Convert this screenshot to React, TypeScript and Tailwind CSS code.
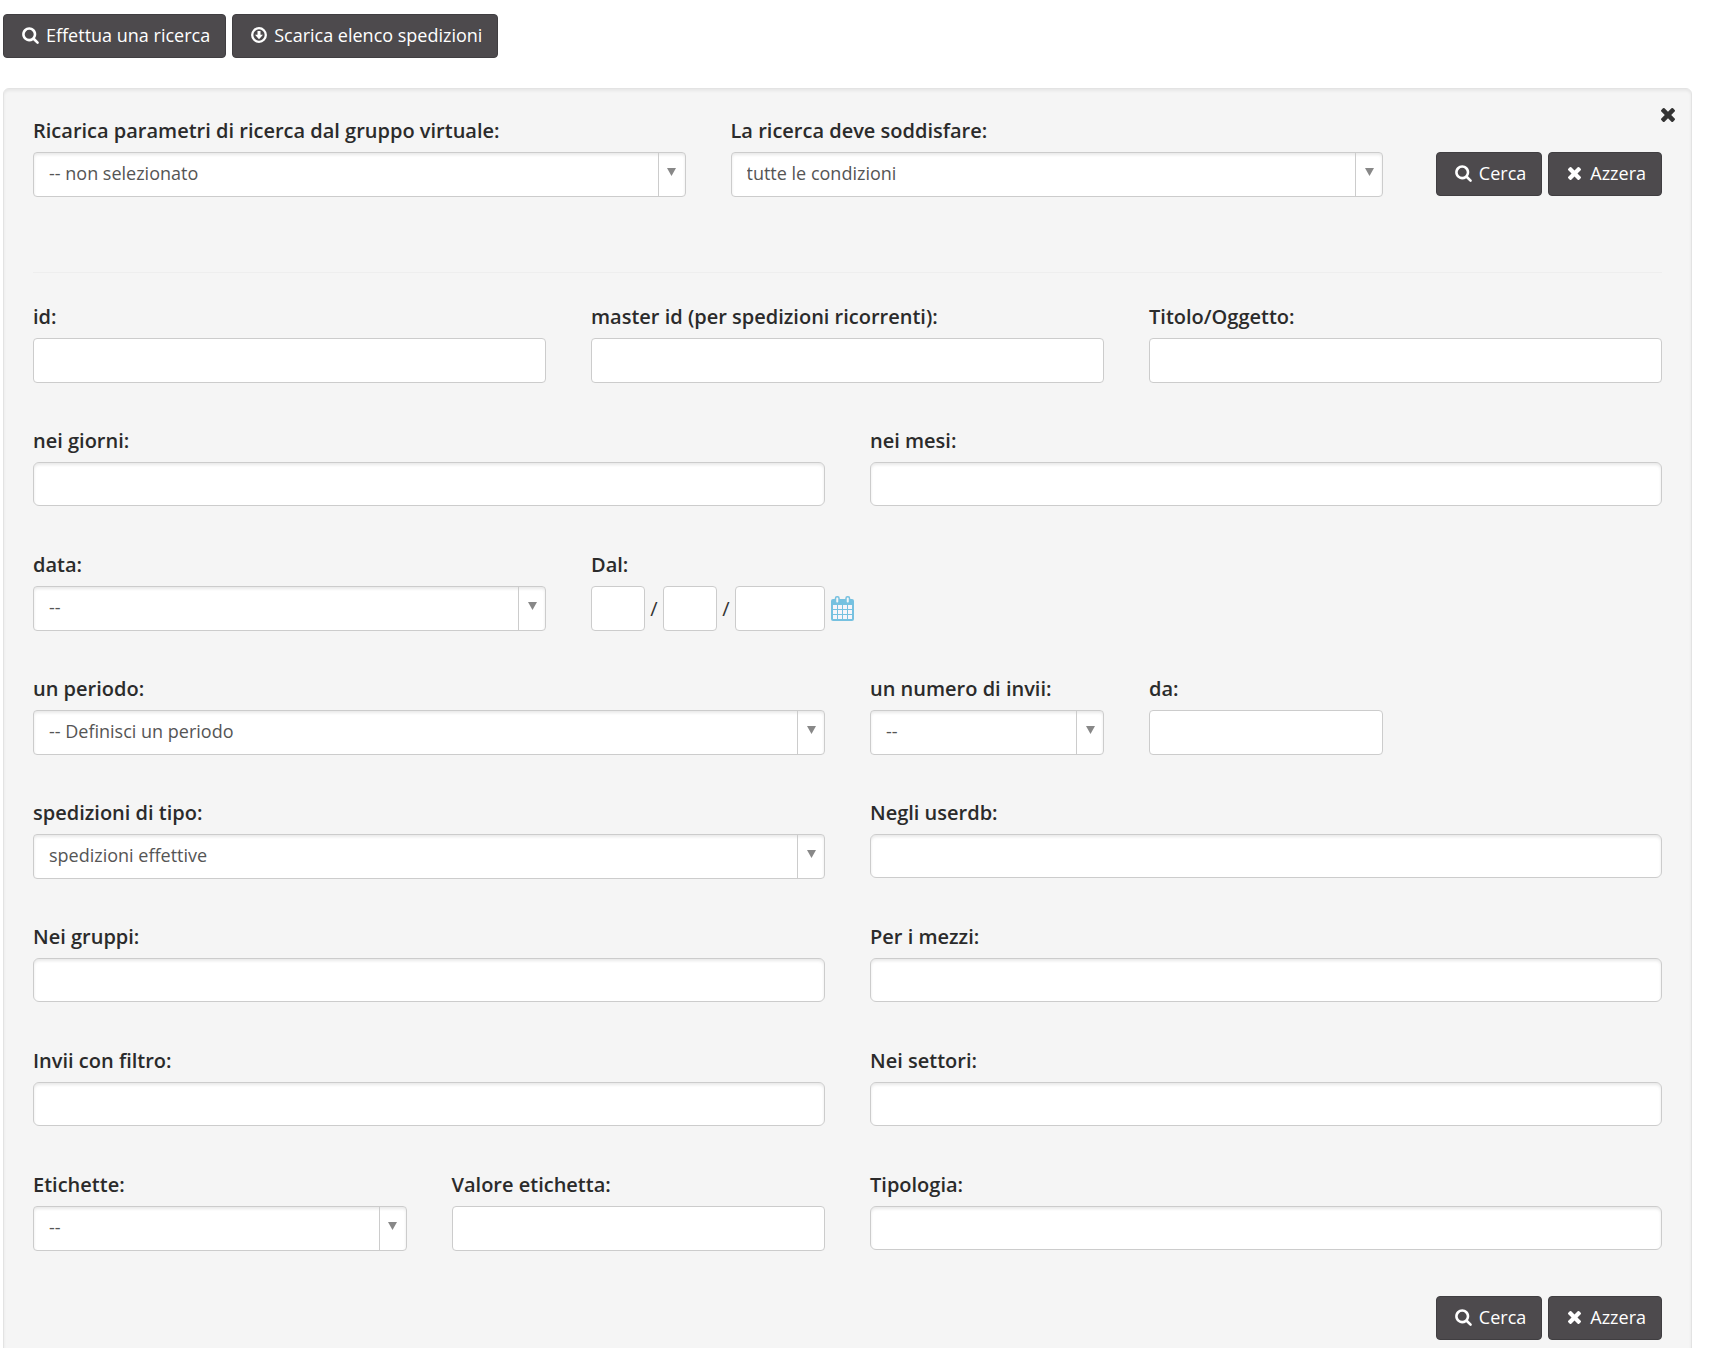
import type { ReactNode } from "react";

function SearchIcon() {
  return (
    <svg viewBox="0 0 1664 1792" className="h-[18px] w-[17px]" fill="currentColor" aria-hidden="true">
      <path d="M1152 832q0-185-131.5-316.5T704 384 387.5 515.5 256 832t131.5 316.5T704 1280t316.5-131.5T1152 832zm512 832q0 52-38 90t-90 38q-54 0-90-38l-343-342q-179 124-399 124-143 0-273.500-55.500t-225-150-150-225T0 832t55.500-273.500 150-225 225-150T704 128t273.500 55.500 225 150 150 225T1408 832q0 220-124 399l343 343q37 37 37 90z" />
    </svg>
  );
}

function CrossIcon({ className }: { className: string }) {
  return (
    <svg viewBox="302 302 1188 1188" className={className} fill="currentColor" aria-hidden="true">
      <path d="M1490 1258q0 40-28 68l-136 136q-28 28-68 28t-68-28l-294-294-294 294q-28 28-68 28t-68-28l-136-136q-28-28-28-68t28-68l294-294-294-294q-28-28-28-68t28-68l136-136q28-28 68-28t68 28l294 294 294-294q28-28 68-28t68 28l136 136q28 28 28 68t-28 68l-294 294 294 294q28 28 28 68z" />
    </svg>
  );
}

function DownloadIcon() {
  return (
    <svg viewBox="0 0 16 16" className="size-4" aria-hidden="true">
      <circle cx="8" cy="8" r="6.800" fill="none" stroke="currentColor" strokeWidth="2.300" />
      <path d="M6.500 4h3v3.700h2.500L8 12.200 4 7.700h2.500z" fill="currentColor" />
    </svg>
  );
}

function CalendarIcon() {
  return (
    <svg viewBox="0 0 23 25" className="h-[25px] w-[23px]" aria-hidden="true">
      <rect x="0" y="3" width="23" height="22" rx="2" fill="#76c1e0" />
      <g fill="#f7f5fa">
        <path d="M2 9h4v4H2zM7 9h4v4H7zM12 9h4v4h-4zM17 9h4v4h-4z" />
        <path d="M2 14h4v4H2zM7 14h4v4H7zM12 14h4v4h-4zM17 14h4v4h-4z" />
        <path d="M2 19h4v4H2zM7 19h4v4H7zM12 19h4v4h-4zM17 19h4v4h-4z" />
      </g>
      <rect x="4.500" y="0.800" width="3.500" height="6.400" rx="1.500" fill="#f5f5f5" stroke="#76c1e0" strokeWidth="1.500" />
      <rect x="15" y="0.800" width="3.500" height="6.400" rx="1.500" fill="#f5f5f5" stroke="#76c1e0" strokeWidth="1.500" />
    </svg>
  );
}

function Button({ icon, children }: { icon: ReactNode; children: ReactNode }) {
  return (
    <button
      type="button"
      className="flex h-11 items-center gap-[7px] whitespace-nowrap rounded border border-[#403e41] bg-[#4d4a4d] pb-0.5 pl-[18px] pr-[15px] text-lg leading-6 text-white"
    >
      {icon}
      {children}
    </button>
  );
}

function Actions() {
  return (
    <>
      <Button icon={<SearchIcon />}>Cerca</Button>
      <Button icon={<CrossIcon className="ml-px mr-0.5 size-[13px]" />}>Azzera</Button>
    </>
  );
}

function Field({ id, label, span, children }: { id: string; label: string; span: string; children: ReactNode }) {
  return (
    <div className={span}>
      <label htmlFor={id} className="mb-2 block whitespace-nowrap text-xl leading-[26px] font-semibold text-[#2b2b2b]">
        {label}
      </label>
      {children}
    </div>
  );
}

const shadow = "shadow-[inset_0_2px_3px_rgba(0,0,0,0.09)]";

function TextField({ id, label, span }: { id: string; label: string; span: string }) {
  return (
    <Field id={id} label={label} span={span}>
      <input id={id} type="text" className="block h-[45px] w-full rounded border border-[#ccc] bg-white px-3.5 text-lg text-[#555]" />
    </Field>
  );
}

function TagField({ id, label, span }: { id: string; label: string; span: string }) {
  return (
    <Field id={id} label={label} span={span}>
      <input id={id} type="text" className={`block h-11 w-full rounded-md border border-[#ccc] bg-white px-3.5 text-lg text-[#555] ${shadow}`} />
    </Field>
  );
}

function SelectField({ id, label, span, value }: { id: string; label: string; span: string; value: string }) {
  return (
    <Field id={id} label={label} span={span}>
      <div className="relative">
        <select
          id={id}
          className={`block h-[45px] w-full appearance-none rounded border border-[#ccc] bg-white pb-1 pl-[15px] pr-9 text-lg leading-6 text-[#555] ${shadow}`}
        >
          <option>{value}</option>
        </select>
        <span className="pointer-events-none absolute inset-y-px right-px flex w-[27px] justify-center border-l border-[#ccc] pt-[15px]">
          <svg viewBox="0 0 9 8" className="h-2 w-[9px]" fill="#888" aria-hidden="true">
            <path d="M0 0h9L4.500 8z" />
          </svg>
        </span>
      </div>
    </Field>
  );
}

const dateBox = "block h-[45px] rounded border border-[#ccc] bg-white px-2 text-lg text-[#555]";

export default function App() {
  return (
    <main className="h-screen overflow-hidden bg-white pl-[3px] pr-[21px] pt-3.5 font-['Open_Sans',sans-serif] text-[#333]">
      <div className="flex gap-1.5">
        <Button icon={<SearchIcon />}>Effettua una ricerca</Button>
        <Button icon={<DownloadIcon />}>Scarica elenco spedizioni</Button>
      </div>

      <form className="relative mt-[30px] rounded-md border border-[#e3e3e3] bg-[#f5f5f5] px-[29px] pb-7 pt-[29px] shadow-[inset_0_2px_3px_rgba(0,0,0,0.06)]">
        <button type="button" aria-label="Chiudi" className="absolute right-4 top-[19px] text-[#333]">
          <CrossIcon className="size-[14px]" />
        </button>

        <div className="grid grid-cols-12 gap-x-[45px] border-b border-[#eee] pb-[75px]">
          <SelectField id="gruppo" label="Ricarica parametri di ricerca dal gruppo virtuale:" span="col-span-5" value="-- non selezionato" />
          <SelectField id="condizioni" label="La ricerca deve soddisfare:" span="col-span-5" value="tutte le condizioni" />
          <div className="col-span-2 flex justify-end gap-1.5 pt-[34px]">
            <Actions />
          </div>
        </div>

        <div className="mt-[31px] grid auto-rows-[minmax(79px,auto)] grid-cols-12 gap-[45px]">
          <TextField id="id" label="id:" span="col-span-4" />
          <TextField id="master" label="master id (per spedizioni ricorrenti):" span="col-span-4" />
          <TextField id="titolo" label="Titolo/Oggetto:" span="col-span-4" />

          <TagField id="giorni" label="nei giorni:" span="col-span-6" />
          <TagField id="mesi" label="nei mesi:" span="col-span-6" />

          <SelectField id="data" label="data:" span="col-span-4" value="--" />
          <Field id="giorno" label="Dal:" span="col-span-8">
            <div className="flex items-center text-xl">
              <input id="giorno" type="text" className={`${dateBox} w-[54px]`} />
              <span className="w-[18px] text-center">/</span>
              <input type="text" aria-label="Mese" className={`${dateBox} w-[54px]`} />
              <span className="w-[18px] text-center">/</span>
              <input type="text" aria-label="Anno" className={`${dateBox} w-[90px]`} />
              <button type="button" aria-label="Apri calendario" className="ml-1.5">
                <CalendarIcon />
              </button>
            </div>
          </Field>

          <SelectField id="periodo" label="un periodo:" span="col-span-6" value="-- Definisci un periodo" />
          <SelectField id="invii" label="un numero di invii:" span="col-span-2" value="--" />
          <TextField id="da" label="da:" span="col-span-2" />

          <SelectField id="tipo" label="spedizioni di tipo:" span="col-span-6" value="spedizioni effettive" />
          <TagField id="userdb" label="Negli userdb:" span="col-span-6" />

          <TagField id="gruppi" label="Nei gruppi:" span="col-span-6" />
          <TagField id="mezzi" label="Per i mezzi:" span="col-span-6" />

          <TagField id="filtro" label="Invii con filtro:" span="col-span-6" />
          <TagField id="settori" label="Nei settori:" span="col-span-6" />

          <div className="col-span-6 grid grid-cols-2 gap-x-[45px]">
            <SelectField id="etichette" label="Etichette:" span="" value="--" />
            <TextField id="valore" label="Valore etichetta:" span="" />
          </div>
          <TagField id="tipologia" label="Tipologia:" span="col-span-6" />
        </div>

        <div className="mt-[45px] flex justify-end gap-1.5">
          <Actions />
        </div>
      </form>
    </main>
  );
}
